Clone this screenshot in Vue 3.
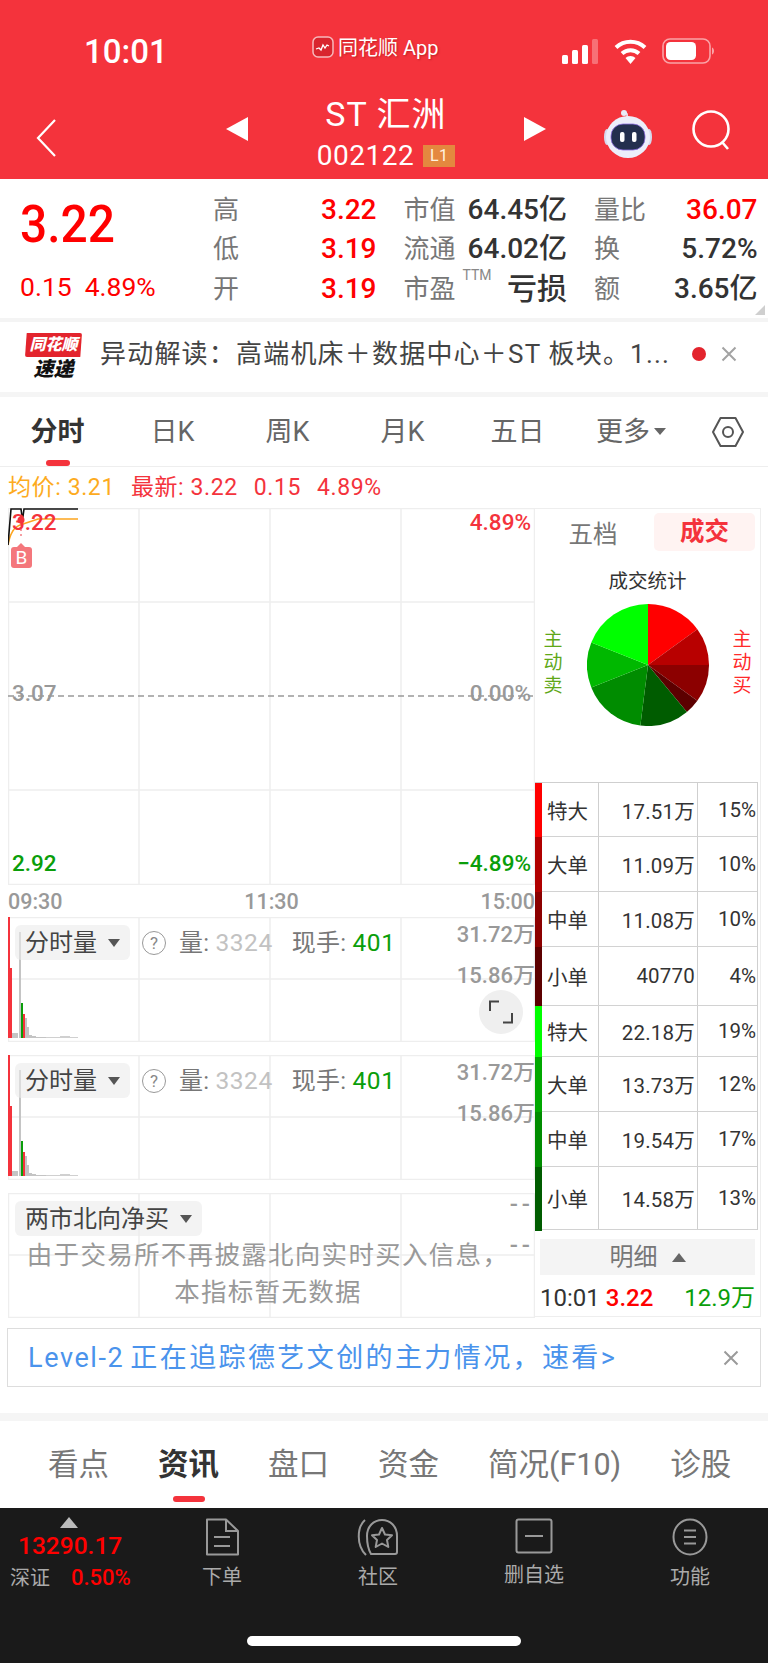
<script setup>
const quoteRows = [
  [
    { label: "高", value: "3.22", red: true },
    { label: "市值", value: "64.45亿" },
    { label: "量比", value: "36.07", red: true },
  ],
  [
    { label: "低", value: "3.19", red: true },
    { label: "流通", value: "64.02亿" },
    { label: "换", value: "5.72%" },
  ],
  [
    { label: "开", value: "3.19", red: true },
    { label: "市盈", value: "亏损", ttm: true },
    { label: "额", value: "3.65亿" },
  ],
];

const periods = ["日K", "周K", "月K", "五日"];

// order here is the clockwise order of the pie
const pieSlices = [
  { pct: 15, color: "#ff0000" },
  { pct: 10, color: "#b80000" },
  { pct: 10, color: "#8c0000" },
  { pct: 4, color: "#5c0000" },
  { pct: 13, color: "#005c00" },
  { pct: 17, color: "#008c00" },
  { pct: 12, color: "#00b800" },
  { pct: 19, color: "#00ff00" },
];

const polar = (pct) => {
  const a = (pct / 100) * Math.PI * 2;
  return [61 + 61 * Math.sin(a), 61 - 61 * Math.cos(a)];
};

let acc = 0;
const pieParts = pieSlices.map((s) => {
  const [x1, y1] = polar(acc);
  acc += s.pct;
  const [x2, y2] = polar(acc);
  const large = s.pct > 50 ? 1 : 0;
  return { d: `M61 61L${x1} ${y1}A61 61 0 ${large} 1 ${x2} ${y2}Z`, color: s.color };
});

const dealRows = [
  { name: "特大", amount: "17.51万", pct: "15%", color: "#ff0000", h: 54 },
  { name: "大单", amount: "11.09万", pct: "10%", color: "#b00000", h: 55 },
  { name: "中单", amount: "11.08万", pct: "10%", color: "#8c0000", h: 55 },
  { name: "小单", amount: "40770", pct: "4%", color: "#5c0000", h: 59 },
  { name: "特大", amount: "22.18万", pct: "19%", color: "#00ff00", h: 51 },
  { name: "大单", amount: "13.73万", pct: "12%", color: "#00a800", h: 55 },
  { name: "中单", amount: "19.54万", pct: "17%", color: "#008c00", h: 55 },
  { name: "小单", amount: "14.58万", pct: "13%", color: "#005c00", h: 63 },
];

const volBars = [
  { x: 0, w: 2, h: 121, c: "#f4333c" },
  { x: 2, w: 2, h: 70, c: "#f4333c" },
  { x: 4, w: 6, h: 5, c: "#c4c4c4" },
  { x: 11, w: 2, h: 106, c: "#c4c4c4" },
  { x: 13, w: 2, h: 35, c: "#0a9e0a" },
  { x: 15, w: 2, h: 24, c: "#f4333c" },
  { x: 17, w: 2, h: 20, c: "#c4c4c4" },
  { x: 19, w: 2, h: 11, c: "#c4c4c4" },
  { x: 21, w: 3, h: 3, c: "#c4c4c4" },
  { x: 24, w: 4, h: 2, c: "#c4c4c4" },
  { x: 28, w: 10, h: 1, c: "#c4c4c4" },
  { x: 38, w: 14, h: 1, c: "#d0d0d0" },
  { x: 52, w: 10, h: 2, c: "#d0d0d0" },
  { x: 62, w: 8, h: 1, c: "#d0d0d0" },
];

const volCharts = [{ id: 1, expand: true }, { id: 2, expand: false }];

const bottomTabs = ["看点", "资讯", "盘口", "资金", "简况(F10)", "诊股"];
</script>

<template>
  <div class="page">
    <header class="head">
      <div class="status">
        <span class="time">10:01</span>
        <span class="source">
          <svg width="22" height="22" viewBox="0 0 22 22">
            <rect x="1" y="1" width="20" height="20" rx="5" fill="#d9252e" stroke="#f6b9bc" stroke-width="1.5" />
            <path d="M4 13l3-1 2 2 2-5 2 3 2-3 2 1" fill="none" stroke="#fff" stroke-width="1.3" />
          </svg>
          同花顺 App
        </span>
        <div class="status-icons">
          <svg class="signal" width="37" height="25" viewBox="0 0 37 25">
            <rect x="0" y="16" width="6" height="9" rx="1.5" fill="#fff" />
            <rect x="10" y="11" width="6" height="14" rx="1.5" fill="#fff" />
            <rect x="20" y="6" width="6" height="19" rx="1.5" fill="#fff" />
            <rect x="30" y="0" width="6" height="25" rx="1.5" fill="#fff" opacity="0.3" />
          </svg>
          <svg width="33" height="25" viewBox="0 0 33 25">
            <path d="M2 8.5a21 21 0 0 1 29 0" fill="none" stroke="#fff" stroke-width="4" />
            <path d="M8 14.5a12.5 12.5 0 0 1 17 0" fill="none" stroke="#fff" stroke-width="4" />
            <path d="M16.5 25l-5-6a7 7 0 0 1 10 0z" fill="#fff" />
          </svg>
          <svg width="52" height="26" viewBox="0 0 52 26">
            <rect x="1" y="1" width="47" height="24" rx="7" fill="none" stroke="#fff" stroke-opacity="0.55" stroke-width="1.6" />
            <rect x="4" y="4" width="30" height="18" rx="4.5" fill="#fff" />
            <path d="M50 9.5c1.500.6 2 2 2 3.500s-.5 2.900-2 3.500z" fill="#fff" opacity="0.55" />
          </svg>
        </div>
      </div>
      <nav class="nav">
        <div class="nav-left">
          <svg width="22" height="40" viewBox="0 0 22 40">
            <path d="M20 2L3 20l17 18" fill="none" stroke="#fff" stroke-width="2.2" />
          </svg>
        </div>
        <div class="nav-center">
          <span class="tri tri-left"></span>
          <div class="title-stack">
            <div class="title">ST 汇洲</div>
            <div class="code">002122<span class="level">L1</span></div>
          </div>
          <span class="tri tri-right"></span>
        </div>
        <div class="nav-right">
          <svg width="50" height="50" viewBox="0 0 50 50">
            <path d="M24 9c0-3 1-5 -2-5" fill="none" stroke="#e9ebf8" stroke-width="1.6" />
            <circle cx="21" cy="4" r="3" fill="#e9ebf8" />
            <ellipse cx="4" cy="28" rx="3" ry="8" fill="#d6d9ee" />
            <ellipse cx="46" cy="28" rx="3" ry="8" fill="#d6d9ee" />
            <ellipse cx="25" cy="28" rx="22" ry="21" fill="#eceefa" />
            <rect x="8" y="15" width="34" height="26" rx="12" fill="#232f4e" stroke="#8d6fe0" stroke-width="0.8" />
            <rect x="17" y="23" width="4.500" height="10" rx="2" fill="#fff" />
            <rect x="29" y="23" width="4.500" height="10" rx="2" fill="#fff" />
          </svg>
          <svg width="44" height="44" viewBox="0 0 44 44">
            <circle cx="20" cy="20" r="17.500" fill="none" stroke="#fff" stroke-width="2.600" />
            <path d="M31 33l6 7" fill="none" stroke="#fff" stroke-width="2.600" />
          </svg>
        </div>
      </nav>
    </header>

    <section class="quote">
      <div class="quote-now">
        <div class="price">3.22</div>
        <div class="change"><span>0.15</span><span>4.89%</span></div>
      </div>
      <div class="quote-grid">
        <template v-for="(row, i) in quoteRows" :key="i">
          <div v-for="cell in row" :key="cell.label" class="q-cell">
            <span class="q-label">{{ cell.label }}<sup v-if="cell.ttm" class="ttm">TTM</sup></span>
            <span class="q-value" :class="{ red: cell.red, big: cell.ttm }">{{ cell.value }}</span>
          </div>
        </template>
      </div>
      <span class="corner"></span>
    </section>

    <section class="news">
      <div class="news-logo">
        <div class="logo-top">同花顺</div>
        <div class="logo-bottom">速递</div>
      </div>
      <div class="news-text">异动解读：高端机床＋数据中心＋ST 板块。1...</div>
      <span class="news-dot"></span>
      <svg class="close" width="16" height="16" viewBox="0 0 16 16">
        <path d="M1.500 1.500l13 13M14.500 1.500l-13 13" stroke="#a3a3a3" stroke-width="2" />
      </svg>
    </section>

    <div class="period-tabs">
      <div class="period active">分时<i class="mark"></i></div>
      <div v-for="p in periods" :key="p" class="period">{{ p }}</div>
      <div class="period more">更多<i class="more-tri"></i></div>
      <div class="gear">
        <svg width="34" height="32" viewBox="0 0 34 32">
          <path d="M9.500 2h15L32 16l-7.500 14h-15L2 16z" fill="none" stroke="#555" stroke-width="2" stroke-linejoin="round" />
          <circle cx="17" cy="16" r="5" fill="none" stroke="#555" stroke-width="2" />
        </svg>
      </div>
    </div>

    <div class="legend">
      <span class="avg">均价: 3.21</span>
      <span class="latest">最新: 3.22</span>
      <span class="latest">0.15</span>
      <span class="latest">4.89%</span>
    </div>

    <main class="main">
      <div class="charts">
        <div class="price-chart">
          <svg class="chart-svg" width="527" height="377">
            <g stroke="#eeeeee" stroke-width="1.500">
              <path d="M.5 0V377M131 0V377M262 0V377M393 0V377M526.500 0V377M0 .5H527M0 94H527M0 282H527M0 376.500H527" fill="none" />
            </g>
            <path d="M0 188H525" stroke="#999" stroke-width="1.500" stroke-dasharray="6 4" fill="none" />
            <path d="M0 37Q3 20 12 17T30 11H70" fill="none" stroke="#fda51e" stroke-width="1.600" />
            <path d="M0 37L3 1H13L14.500 12L16 1H70" fill="none" stroke="#111" stroke-width="1.600" />
            <circle cx="13" cy="12" r="3.500" fill="#f4333c" />
            <path d="M13 16V31" stroke="#f47f84" stroke-width="1.500" stroke-dasharray="2 3" />
          </svg>
          <span class="buy-mark">B</span>
          <span class="pl pl-left red-soft" style="top: 7px">3.22</span>
          <span class="pl pl-right red-soft" style="top: 7px">4.89%</span>
          <span class="pl pl-left grey" style="top: 178px">3.07</span>
          <span class="pl pl-right grey" style="top: 178px">0.00%</span>
          <span class="pl pl-left green" style="top: 348px">2.92</span>
          <span class="pl pl-right green" style="top: 348px">−4.89%</span>
        </div>

        <div class="axis"><span>09:30</span><span>11:30</span><span>15:00</span></div>

        <div v-for="c in volCharts" :key="c.id" class="vol-chart">
          <svg class="chart-svg" width="527" height="125">
            <path d="M.5 0V125M131 0V125M262 0V125M393 0V125M526.500 0V125M0 .5H527M0 62H527M0 124.500H527" fill="none" stroke="#eeeeee" stroke-width="1.500" />
            <rect v-for="b in volBars" :key="b.x" :x="b.x" :y="121 - b.h" :width="b.w" :height="b.h" :fill="b.c" />
          </svg>
          <div class="vol-head">
            <div class="pill">分时量<i class="pill-tri"></i></div>
            <span class="help">?</span>
            <span class="vol-stat">量: <b class="light">3324</b></span>
            <span class="vol-stat hand">现手: <b class="hand-num">401</b></span>
          </div>
          <span class="vol-top">31.72万</span>
          <span class="vol-mid">15.86万</span>
          <div v-if="c.expand" class="expand">
            <svg width="24" height="24" viewBox="0 0 24 24">
              <path d="M1 11V1.500H10M23 13V22.500H14" fill="none" stroke="#444" stroke-width="2" />
            </svg>
          </div>
        </div>

        <div class="vol-chart north">
          <svg class="chart-svg" width="527" height="125">
            <path d="M.5 0V125M131 0V125M262 0V125M393 0V125M526.500 0V125M0 .5H527M0 62H527M0 124.500H527" fill="none" stroke="#eeeeee" stroke-width="1.500" />
          </svg>
          <div class="vol-head">
            <div class="pill">两市北向净买<i class="pill-tri"></i></div>
          </div>
          <span class="vol-top dash">--</span>
          <span class="vol-mid dash">--</span>
          <p class="no-data">由于交易所不再披露北向实时买入信息，<br />本指标暂无数据</p>
        </div>
      </div>

      <aside class="side">
        <div class="side-tabs">
          <span class="side-tab">五档</span>
          <span class="side-tab on">成交</span>
        </div>
        <div class="pie-title">成交统计</div>
        <div class="pie-row">
          <div class="vert sell">主<br />动<br />卖</div>
          <svg width="122" height="122" viewBox="0 0 122 122">
            <path v-for="p in pieParts" :key="p.color" :d="p.d" :fill="p.color" />
          </svg>
          <div class="vert buy">主<br />动<br />买</div>
        </div>
        <div class="deal-table">
          <div v-for="(r, i) in dealRows" :key="i" class="deal-row" :style="{ height: r.h + 'px' }">
            <i class="deal-bar" :style="{ background: r.color }"></i>
            <span class="d-name">{{ r.name }}</span>
            <span class="d-amount">{{ r.amount }}</span>
            <span class="d-pct">{{ r.pct }}</span>
          </div>
        </div>
        <div class="detail-btn">明细<i class="up-tri"></i></div>
        <div class="tick">
          <span class="t-time">10:01</span>
          <span class="t-price">3.22</span>
          <span class="t-vol">12.9万</span>
        </div>
      </aside>
    </main>

    <div class="banner">
      <span class="banner-text"><span class="lvl">Level-2</span>正在追踪德艺文创的主力情况，速看&gt;</span>
      <svg width="16" height="16" viewBox="0 0 16 16">
        <path d="M1.500 1.500l13 13M14.500 1.500l-13 13" stroke="#9a9a9a" stroke-width="2" />
      </svg>
    </div>

    <div class="strip"></div>

    <div class="info-tabs">
      <div v-for="t in bottomTabs" :key="t" class="info-tab" :class="{ active: t === '资讯' }">
        {{ t }}<i v-if="t === '资讯'" class="mark wide"></i>
      </div>
    </div>

    <footer class="foot">
      <div class="index">
        <i class="index-tri"></i>
        <div class="index-num">13290.17</div>
        <div class="index-sub"><span>深证</span><b>0.50%</b></div>
      </div>
      <div class="foot-item first">
        <svg width="36" height="38" viewBox="0 0 36 38">
          <path d="M3 1.500H22L34 13V36.500H3z" fill="none" stroke="#999" stroke-width="2" stroke-linejoin="round" />
          <path d="M22 1.500V13H34M10 19H26M10 28H26" fill="none" stroke="#999" stroke-width="2" />
        </svg>
        <span>下单</span>
      </div>
      <div class="foot-item">
        <svg width="42" height="38" viewBox="0 0 42 38">
          <path d="M14 36H38c1.500 0 2-1 2-2V18C40 8 33 2 25 2S10 8 10 18c0 8 1 13 4 18z" fill="none" stroke="#999" stroke-width="2" />
          <path d="M8 2C0 9-1 27 9 37" fill="none" stroke="#999" stroke-width="2" />
          <path d="M25 10l3 6.500 7 .8-5 4.700 1.300 7-6.300-3.500-6.300 3.500 1.300-7-5-4.700 7-.8z" fill="none" stroke="#999" stroke-width="2" stroke-linejoin="round" />
        </svg>
        <span>社区</span>
      </div>
      <div class="foot-item">
        <svg width="38" height="36" viewBox="0 0 38 36">
          <rect x="1.500" y="1.500" width="35" height="33" rx="2" fill="none" stroke="#999" stroke-width="2" />
          <path d="M10 18H28" stroke="#999" stroke-width="2" />
        </svg>
        <span>删自选</span>
      </div>
      <div class="foot-item">
        <svg width="36" height="38" viewBox="0 0 36 38">
          <ellipse cx="18" cy="19" rx="16.500" ry="17.500" fill="none" stroke="#999" stroke-width="2" />
          <path d="M12 12.500H24M12 19H24M12 25.500H24" stroke="#999" stroke-width="2" />
        </svg>
        <span>功能</span>
      </div>
      <div class="home-bar"></div>
    </footer>
  </div>
</template>

<style scoped>
.page {
  position: relative;
  width: 768px;
  height: 1663px;
  overflow: hidden;
  background: #fff;
  color: #333;
  font-family: Roboto, "Noto Sans CJK SC", sans-serif;
}

.head {
  height: 179px;
  background: #f4333c;
  color: #fff;
}
.status {
  position: relative;
  height: 92px;
  display: flex;
  align-items: center;
  padding: 10px 54px 0 84px;
  box-sizing: border-box;
}
.time {
  font-size: 33px;
  font-weight: 500;
}
.source {
  position: absolute;
  left: 312px;
  top: 32px;
  display: flex;
  align-items: center;
  gap: 4px;
  font-size: 20px;
  text-shadow: 1px 1px 2px rgba(120, 0, 0, 0.4);
}
.status-icons {
  margin-left: auto;
  display: flex;
  align-items: center;
  gap: 15px;
}
.nav {
  display: grid;
  grid-template-columns: 226px 320px 222px;
  height: 87px;
}
.nav-left {
  padding: 26px 0 0 35px;
}
.nav-center {
  display: flex;
  align-items: center;
  justify-content: space-between;
}
.tri {
  width: 0;
  height: 0;
  border-top: 12px solid transparent;
  border-bottom: 12px solid transparent;
  margin-top: -14px;
}
.tri-left {
  border-right: 22px solid #fff;
}
.tri-right {
  border-left: 22px solid #fff;
}
.title-stack {
  display: flex;
  flex-direction: column;
  align-items: center;
  margin-top: -6px;
}
.title {
  font-size: 34px;
  line-height: 46px;
  letter-spacing: 1px;
}
.code {
  display: flex;
  align-items: center;
  margin-top: 1px;
  font-size: 28px;
  line-height: 36px;
  letter-spacing: 0.5px;
}
.level {
  margin-left: 9px;
  width: 32px;
  height: 22px;
  background: #e4883f;
  color: #fff2e0;
  font-size: 16px;
  line-height: 22px;
  text-align: center;
}
.nav-right {
  display: flex;
  gap: 38px;
  padding: 17px 0 0 57px;
  align-items: flex-start;
}

.quote {
  position: relative;
  display: flex;
  height: 139px;
  padding-top: 11px;
  box-sizing: border-box;
}
.quote-now {
  width: 213px;
  padding-left: 20px;
  box-sizing: border-box;
  color: #ff0000;
}
.price {
  font-size: 52px;
  font-weight: 500;
  line-height: 70px;
  transform: scaleX(0.92);
  transform-origin: left center;
}
.change {
  display: flex;
  gap: 13px;
  margin-top: 10px;
  font-size: 26.500px;
  line-height: 34px;
}
.quote-grid {
  display: grid;
  grid-template-columns: repeat(3, 163.500px);
  grid-auto-rows: 39.500px;
  column-gap: 27px;
  align-content: start;
}
.q-cell {
  display: flex;
  align-items: center;
  justify-content: space-between;
  line-height: 32px;
}
.q-label {
  position: relative;
  font-size: 26px;
  line-height: 32px;
  color: #777;
}
.ttm {
  position: absolute;
  left: 59px;
  top: -6px;
  font-size: 14px;
  line-height: 16px;
  color: #888;
}
.q-value {
  font-size: 28px;
  font-weight: 500;
  line-height: 32px;
  color: #333;
}
.q-value.red {
  color: #ff0000;
}
.q-value.big {
  font-size: 30px;
}
.corner {
  position: absolute;
  right: 3px;
  bottom: 3px;
  width: 10px;
  height: 10px;
  background: #cfcfcf;
  clip-path: polygon(100% 0, 100% 100%, 0 100%);
}

.news {
  display: flex;
  align-items: center;
  height: 70px;
  border-top: 4px solid #f4f4f4;
  border-bottom: 5px solid #f5f5f5;
  padding-left: 25px;
}
.news-logo {
  width: 57px;
  text-align: center;
  font-style: italic;
  font-weight: 900;
}
.logo-top {
  height: 24px;
  background: #e3242d;
  color: #fff;
  font-size: 16px;
  line-height: 24px;
  border-radius: 2px;
  clip-path: polygon(3% 0, 100% 0, 97% 100%, 0 100%);
}
.logo-bottom {
  color: #111;
  font-size: 20px;
  line-height: 24px;
}
.news-text {
  margin: 0 0 6px 18px;
  width: 588px;
  font-size: 26px;
  line-height: 36px;
  letter-spacing: 1.200px;
  color: #444;
  white-space: nowrap;
  overflow: hidden;
}
.news-dot {
  width: 14px;
  height: 14px;
  margin: 0 0 6px 4px;
  border-radius: 50%;
  background: #e3242d;
}
.close {
  margin: 0 0 6px 15px;
}

.period-tabs {
  display: grid;
  grid-template-columns: repeat(5, 115px) 112px 1fr;
  height: 70px;
  border-bottom: 1.500px solid #eee;
  box-sizing: border-box;
}
.period {
  position: relative;
  display: flex;
  align-items: center;
  justify-content: center;
  font-size: 27px;
  line-height: 36px;
  color: #666;
}
.period.active {
  color: #333;
  font-weight: 700;
}
.mark {
  position: absolute;
  left: 50%;
  bottom: 0;
  width: 24px;
  height: 6px;
  margin-left: -12px;
  border-radius: 3px;
  background: #f4333c;
}
.more-tri {
  margin-left: 4px;
  border-top: 7px solid #666;
  border-left: 6px solid transparent;
  border-right: 6px solid transparent;
}
.gear {
  display: flex;
  align-items: center;
  justify-content: center;
}

.legend {
  display: flex;
  gap: 16px;
  height: 41px;
  align-items: center;
  padding-left: 8px;
  font-size: 23px;
  line-height: 30px;
  color: #f4333c;
  letter-spacing: 0.6px;
}
.avg {
  color: #fdab1e;
}

.main {
  display: flex;
  height: 809px;
}
.charts {
  width: 527px;
  margin-left: 8px;
  flex: none;
}
.chart-svg {
  position: absolute;
  left: 0;
  top: 0;
}
.price-chart {
  position: relative;
  height: 377px;
}
.pl {
  position: absolute;
  font-size: 22.500px;
  font-weight: 500;
  line-height: 1;
  transform: translateY(-4px);
}
.pl-left {
  left: 4px;
}
.pl-right {
  right: 4px;
}
.red-soft {
  color: #f4333c;
}
.grey {
  color: #999;
}
.green {
  color: #0a9e0a;
}
.buy-mark {
  position: absolute;
  left: 3px;
  top: 39px;
  width: 21px;
  height: 21px;
  border-radius: 3px;
  background: #f4777c;
  color: #fff;
  font-size: 19px;
  line-height: 21px;
  text-align: center;
}
.buy-mark::before {
  content: "";
  position: absolute;
  left: 6px;
  top: -4px;
  border-bottom: 4px solid #f4777c;
  border-left: 4px solid transparent;
  border-right: 4px solid transparent;
}
.axis {
  display: flex;
  justify-content: space-between;
  align-items: center;
  height: 32px;
  font-size: 21.500px;
  font-weight: 500;
  color: #999;
}
.vol-chart {
  position: relative;
  height: 125px;
  margin-bottom: 13px;
}
.vol-head {
  position: relative;
  display: flex;
  align-items: center;
  padding: 8px 0 0 7px;
}
.pill {
  display: flex;
  align-items: center;
  height: 35px;
  padding: 0 10px;
  background: rgba(235, 235, 235, 0.6);
  border-radius: 6px;
  font-size: 24px;
  line-height: 32px;
  color: #444;
}
.pill-tri {
  margin-left: 11px;
  border-top: 8px solid #555;
  border-left: 6px solid transparent;
  border-right: 6px solid transparent;
}
.help {
  width: 22px;
  height: 22px;
  margin-left: 12px;
  border: 1.500px solid #999;
  border-radius: 50%;
  font-size: 17px;
  line-height: 22px;
  text-align: center;
  color: #888;
}
.vol-stat {
  margin-left: 13px;
  font-size: 24px;
  line-height: 32px;
  color: #777;
  white-space: nowrap;
  letter-spacing: 0.2px;
}
.vol-stat.hand {
  margin-left: 19px;
}
.light,
.hand-num {
  font-weight: 400;
  font-size: 24.500px;
  letter-spacing: 0.6px;
}
.light {
  color: #c2c2c2;
}
.hand-num {
  color: #0a9e0a;
}
.vol-top,
.vol-mid {
  position: absolute;
  right: 0;
  font-size: 22px;
  font-weight: 500;
  line-height: 24px;
  color: #999;
}
.vol-top {
  top: 6px;
}
.vol-mid {
  top: 47px;
}
.dash {
  right: 1px;
  margin-top: -7px;
  font-size: 24px;
  letter-spacing: 4px;
}
.expand {
  position: absolute;
  left: 471px;
  top: 73px;
  width: 44px;
  height: 44px;
  display: flex;
  align-items: center;
  justify-content: center;
  border-radius: 50%;
  background: #efefef;
}
.north {
  margin-bottom: 0;
}
.no-data {
  position: absolute;
  left: 0;
  right: 7px;
  top: 44px;
  margin: 0;
  text-align: center;
  font-size: 25.500px;
  line-height: 37px;
  letter-spacing: 1.300px;
  color: #999;
}

.side {
  width: 226px;
  margin-left: 0;
  border-right: 1.500px solid #eee;
  border-top: 1.500px solid #eee;
  border-bottom: 1.500px solid #eee;
  box-sizing: border-box;
  flex: none;
}
.side-tabs {
  display: grid;
  grid-template-columns: 116px 101px;
  column-gap: 3px;
  align-items: center;
  height: 38px;
  margin-top: 4px;
  text-align: center;
  font-size: 24.500px;
  color: #777;
}
.side-tab.on {
  height: 38px;
  line-height: 38px;
  background: #fff3f2;
  border-radius: 5px;
  font-weight: 700;
  color: #f4333c;
}
.pie-title {
  margin-top: 16px;
  text-align: center;
  font-size: 19.500px;
  line-height: 30px;
  color: #333;
}
.pie-row {
  display: flex;
  align-items: center;
  justify-content: space-between;
  margin-top: 7px;
  padding: 0 8px 0 8px;
}
.vert {
  width: 20px;
  font-size: 19px;
  line-height: 23px;
  text-align: center;
  margin-top: -6px;
}
.sell {
  color: #5fa818;
}
.buy {
  color: #ff2a2a;
}
.deal-table {
  margin-top: 56px;
  width: 223px;
  border-top: 1.500px solid #cfcfcf;
  border-right: 1.500px solid #cfcfcf;
  box-sizing: border-box;
}
.deal-row {
  display: grid;
  grid-template-columns: 7px 56px 100px 1fr;
  align-items: center;
  box-sizing: border-box;
  border-bottom: 1.500px solid #d2d2d2;
  font-size: 20.500px;
  color: #333;
}
.deal-bar {
  align-self: stretch;
  margin-bottom: -1.500px;
}
.deal-row > span {
  display: flex;
  align-items: center;
  height: 100%;
  box-sizing: border-box;
}
.d-name {
  padding-left: 5px;
}
.d-amount {
  justify-content: flex-end;
  padding-right: 2px;
  border-left: 1.500px solid #cfcfcf;
  border-right: 1.500px solid #cfcfcf;
  letter-spacing: 0.2px;
}
.d-pct {
  justify-content: flex-end;
  padding-right: 1px;
}
.detail-btn {
  display: flex;
  align-items: center;
  justify-content: center;
  gap: 14px;
  margin: 9px 5px 0 5px;
  height: 36px;
  background: #f4f4f4;
  font-size: 24px;
  line-height: 32px;
  color: #777;
}
.up-tri {
  border-bottom: 9px solid #666;
  border-left: 7px solid transparent;
  border-right: 7px solid transparent;
}
.tick {
  display: flex;
  align-items: center;
  height: 46px;
  padding: 0 5px;
  font-size: 24px;
  line-height: 30px;
}
.t-price {
  margin-left: 6px;
  color: #ff0000;
  font-weight: 500;
}
.t-vol {
  margin-left: auto;
  color: #0a9e0a;
}

.banner {
  display: flex;
  align-items: center;
  justify-content: space-between;
  width: 754px;
  height: 59px;
  margin: 11px 0 0 7px;
  padding: 0 21px 0 20px;
  box-sizing: border-box;
  border: 1.500px solid #ddd;
}
.banner-text {
  font-size: 27px;
  line-height: 36px;
  letter-spacing: 2.400px;
  color: #4a93ec;
  white-space: nowrap;
}
.lvl {
  margin-right: 6px;
  letter-spacing: 1.600px;
}
.strip {
  height: 8px;
  margin-top: 26px;
  background: #f5f5f5;
}
.info-tabs {
  display: flex;
  gap: 49px;
  height: 87px;
  padding-left: 48px;
  align-items: center;
}
.info-tab {
  position: relative;
  height: 87px;
  line-height: 87px;
  font-size: 30.500px;
  color: #777;
  white-space: nowrap;
}
.info-tab.active {
  color: #333;
  font-weight: 700;
}
.mark.wide {
  width: 32px;
  margin-left: -16px;
  bottom: 6px;
}

.foot {
  position: relative;
  display: flex;
  height: 155px;
  background: #1a1a1a;
  color: #aaa;
}
.index {
  position: relative;
  width: 180px;
  flex: none;
  padding-left: 10px;
  box-sizing: border-box;
}
.index-tri {
  display: block;
  width: 0;
  margin: 9px 0 0 50px;
  border-bottom: 11px solid #bbb;
  border-left: 9px solid transparent;
  border-right: 9px solid transparent;
}
.index-num {
  margin: 2px 0 0 8px;
  font-size: 24.500px;
  font-weight: 500;
  line-height: 32px;
  color: #ff0000;
}
.index-sub {
  display: flex;
  align-items: center;
  gap: 21px;
  font-size: 20px;
  line-height: 32px;
}
.index-sub b {
  font-size: 22px;
  font-weight: 500;
  color: #ff0000;
}
.foot-item {
  display: flex;
  flex-direction: column;
  align-items: center;
  width: 156px;
  padding-top: 10px;
  font-size: 20px;
  color: #aaa;
}
.foot-item span {
  margin-top: 6px;
  line-height: 30px;
}
.foot-item.first {
  margin-left: -36px;
}
.home-bar {
  position: absolute;
  left: 247px;
  top: 128px;
  width: 274px;
  height: 10px;
  border-radius: 5px;
  background: #fff;
}
</style>

<style>
html,
body {
  margin: 0;
  background: #fff;
}
</style>
